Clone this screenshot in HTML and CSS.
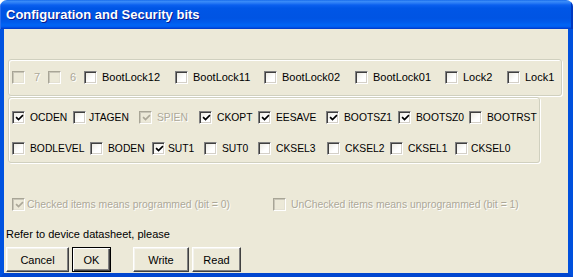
FILE: index.html
```html
<!DOCTYPE html>
<html>
<head>
<meta charset="utf-8">
<link rel="stylesheet" href="styles.css">
</head>
<body>
<div class="window">
  <div class="titlebar"><span class="title">Configuration and Security bits</span></div>
  <div class="frame">
    <div class="group g1">
      <div class="row r1">
        <label class="item dis"><span class="cb"></span><span class="txt dig">7</span></label>
        <label class="item dis"><span class="cb"></span><span class="txt dig">6</span></label>
        <label class="item"><span class="cb"></span><span class="txt">BootLock12</span></label>
        <label class="item"><span class="cb"></span><span class="txt">BootLock11</span></label>
        <label class="item"><span class="cb"></span><span class="txt">BootLock02</span></label>
        <label class="item"><span class="cb"></span><span class="txt">BootLock01</span></label>
        <label class="item"><span class="cb"></span><span class="txt">Lock2</span></label>
        <label class="item"><span class="cb"></span><span class="txt">Lock1</span></label>
      </div>
    </div>
    <div class="group g2">
      <div class="row r2 caps">
        <label class="item"><span class="cb"><svg viewBox="0 0 11 11"><path d="M2 4.5 L4.3 6.8 L9 2.1" /></svg></span><span class="txt">OCDEN</span></label>
        <label class="item"><span class="cb"></span><span class="txt t16">JTAGEN</span></label>
        <label class="item dis"><span class="cb"><svg viewBox="0 0 11 11"><path d="M2 4.5 L4.3 6.8 L9 2.1" /></svg></span><span class="txt">SPIEN</span></label>
        <label class="item"><span class="cb"><svg viewBox="0 0 11 11"><path d="M2 4.5 L4.3 6.8 L9 2.1" /></svg></span><span class="txt">CKOPT</span></label>
        <label class="item"><span class="cb"><svg viewBox="0 0 11 11"><path d="M2 4.5 L4.3 6.8 L9 2.1" /></svg></span><span class="txt">EESAVE</span></label>
        <label class="item"><span class="cb"><svg viewBox="0 0 11 11"><path d="M2 4.5 L4.3 6.8 L9 2.1" /></svg></span><span class="txt">BOOTSZ1</span></label>
        <label class="item"><span class="cb"><svg viewBox="0 0 11 11"><path d="M2 4.5 L4.3 6.8 L9 2.1" /></svg></span><span class="txt">BOOTSZ0</span></label>
        <label class="item"><span class="cb"></span><span class="txt">BOOTRST</span></label>
      </div>
      <div class="row r3 caps">
        <label class="item"><span class="cb"></span><span class="txt">BODLEVEL</span></label>
        <label class="item"><span class="cb"></span><span class="txt">BODEN</span></label>
        <label class="item"><span class="cb"><svg viewBox="0 0 11 11"><path d="M2 4.5 L4.3 6.8 L9 2.1" /></svg></span><span class="txt t16">SUT1</span></label>
        <label class="item"><span class="cb"></span><span class="txt">SUT0</span></label>
        <label class="item"><span class="cb"></span><span class="txt">CKSEL3</span></label>
        <label class="item"><span class="cb"></span><span class="txt">CKSEL2</span></label>
        <label class="item"><span class="cb"></span><span class="txt">CKSEL1</span></label>
        <label class="item"><span class="cb"></span><span class="txt t16">CKSEL0</span></label>
      </div>
    </div>
    <div class="row legend">
      <label class="item dis"><span class="cb"><svg viewBox="0 0 11 11"><path d="M2 4.5 L4.3 6.8 L9 2.1" /></svg></span><span class="txt t15">Checked items means programmed (bit = 0)</span></label>
      <label class="item dis"><span class="cb"></span><span class="txt">UnChecked items means unprogrammed (bit = 1)</span></label>
    </div>
    <div class="note">Refer to device datasheet, please</div>
    <div class="buttons">
      <button class="btn b-cancel">Cancel</button>
      <button class="btn b-ok default">OK</button>
      <button class="btn b-write">Write</button>
      <button class="btn b-read">Read</button>
    </div>
  </div>
</div>
</body>
</html>
```

FILE: styles.css
```css
html, body {
  margin: 0;
  padding: 0;
  background: #ffffff;
}

.window {
  width: 573px;
  height: 277px;
  display: flex;
  flex-direction: column;
  border-radius: 7px 7px 0 0;
  overflow: hidden;
  font-family: "Liberation Sans", Arial, sans-serif;
  font-size: 11px;
  color: #000;
}

.titlebar {
  height: 29px;
  flex: none;
  display: flex;
  align-items: center;
  padding-left: 6px;
  padding-bottom: 1px;
  box-sizing: border-box;
  background: linear-gradient(to bottom,
    #0a5ee6 0px, #3d8ff9 1px, #2a7cf5 3px, #0b60ef 5px,
    #0056e6 8px, #0054e3 18px, #005aeb 22px, #0064f4 25px,
    #005cf0 27px, #0042d6 28px, #003cc8 29px);
  box-shadow: inset -2px 0 0 #0039c0, inset 1px 0 0 #2a6ff0;
}

.title {
  color: #fff;
  font-weight: bold;
  font-size: 13px;
  text-shadow: 1px 1px 0 #0a1a8a;
}

.frame {
  flex: 1;
  background: #ece9d8;
  border-left: 4px solid #0052e0;
  border-right: 5px solid #0050dd;
  border-bottom: 4px solid #0046d0;
  display: flex;
  flex-direction: column;
  min-height: 0;
}

.group {
  margin-left: 4px;
  border: 1px solid #d0d0bf;
  border-radius: 3px;
  box-shadow: inset 1px 1px 0 #fff, 1px 1px 0 #fff;
  box-sizing: border-box;
}

.g1 {
  margin-top: 30px;
  width: 554px;
  height: 37px;
  padding: 11px 0 0 3px;
}

.g2 {
  margin-top: 1px;
  width: 532px;
  height: 66px;
  padding: 13px 0 0 3px;
}

.row {
  display: grid;
  align-items: center;
  height: 13px;
}

.r1 { grid-template-columns: 36px 36px 91px 89px 91px 90px 62px auto; }
.r2 { grid-template-columns: 61px 66px 60px 59px 68px 72px 71px auto; }
.r3 { grid-template-columns: 78px 62px 52px 54px 69px 63px 65px auto; margin-top: 18px; }

.caps .txt { font-size: 10.3px; }

.item {
  display: flex;
  align-items: center;
  white-space: nowrap;
  height: 13px;
}

.cb {
  width: 13px;
  height: 13px;
  flex: none;
  box-sizing: border-box;
  border: 1px solid;
  border-color: #808080 #ffffff #ffffff #808080;
  box-shadow: inset 1px 1px 0 #404040, inset -1px -1px 0 #d4d0c8;
  background: linear-gradient(135deg, #e9e7de 0%, #ffffff 60%);
  display: flex;
  align-items: center;
  justify-content: center;
}

.cb svg {
  width: 9px;
  height: 9px;
  margin-left: 1px;
  margin-top: 1px;
}

.cb path {
  fill: none;
  stroke: #000;
  stroke-width: 2;
  stroke-linecap: square;
}

.txt {
  margin-left: 5px;
  line-height: 13px;
}

.t16 { margin-left: 3px; }
.t15 { margin-left: 2px; }
.dig { margin-left: 9px; }

.dis .txt {
  color: #aca899;
  text-shadow: 1px 1px 0 #fff;
}

.dis .cb {
  background: #ece9d8;
  border-color: #a8a596 #ffffff #ffffff #a8a596;
  box-shadow: inset 1px 1px 0 #c9c6b8, inset -1px -1px 0 #e4e1d3;
}

.dis .cb path { stroke: #aca899; }

.legend {
  margin-top: 35px;
  margin-left: 8px;
  grid-template-columns: 261px auto;
}

.legend .txt { font-size: 10.4px; }

.note {
  margin-top: 16px;
  margin-left: 2px;
  height: 14px;
  line-height: 14px;
}

.buttons {
  margin-top: 6px;
  margin-left: 2px;
  display: flex;
  height: 25px;
}

.btn {
  font-family: "Liberation Sans", Arial, sans-serif;
  font-size: 11px;
  color: #000;
  height: 25px;
  padding: 0;
  background: #ece9d8;
  border: 1px solid;
  border-color: #ffffff #404040 #404040 #ffffff;
  box-shadow: inset -1px -1px 0 #808080, inset 1px 1px 0 #f4f3ee;
  box-sizing: border-box;
  border-radius: 0;
}

.btn.default {
  border: 1px solid #000;
  box-shadow: inset 1px 1px 0 #fff, inset -1px -1px 0 #404040, inset -2px -2px 0 #808080;
}

.b-cancel { width: 63px; }
.b-ok { width: 39px; margin-left: 3px; }
.b-write { width: 56px; margin-left: 22px; }
.b-read { width: 49px; margin-left: 3px; }
```
